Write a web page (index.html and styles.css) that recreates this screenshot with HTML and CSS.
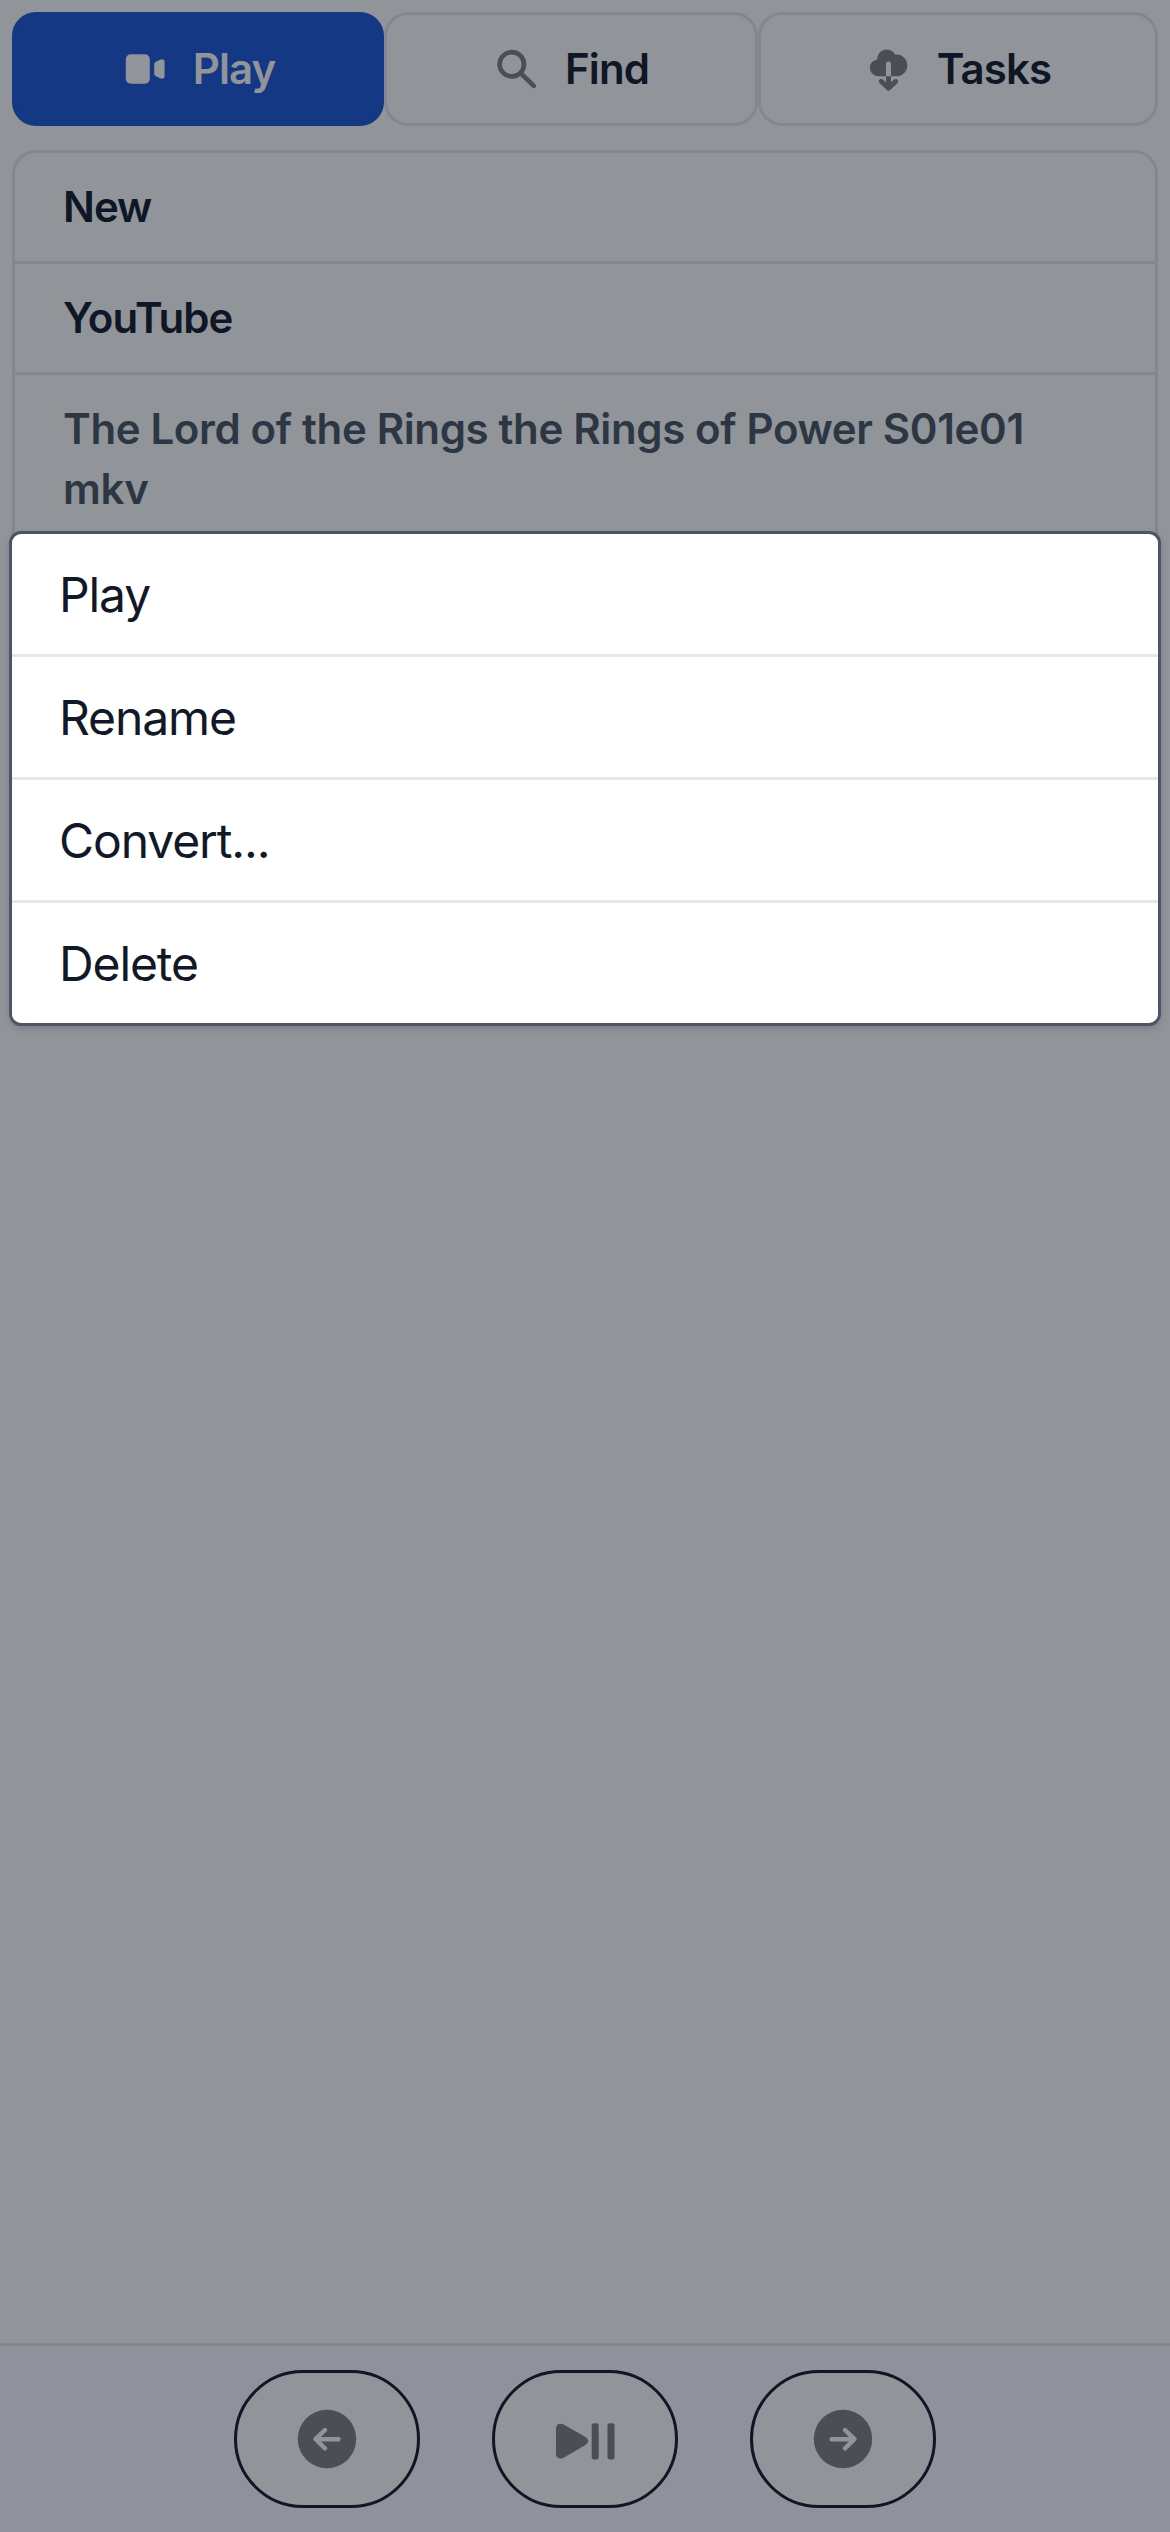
FILE: index.html
```html
<!DOCTYPE html>
<html lang="en">
<head>
<meta charset="utf-8">
<title>Player</title>
<link rel="stylesheet" href="styles.css">
</head>
<body>
<div class="app">
  <nav class="tabs">
    <button class="tab tab-active">
      <svg class="tab-icon" viewBox="0 0 48 48" fill="currentColor"><rect x="4.8" y="9.2" width="24" height="29.6" rx="5"/><path d="M33.2 19.5q0-1.6 1.4-2.5l4.4-2.3q4.6-1.3 4.6 2.3v14q0 3.6-4.6 2.3L34.6 31q-1.4-.9-1.4-2.5z"/></svg>
      <span class="tab-label">Play</span>
    </button>
    <button class="tab">
      <svg class="tab-icon" viewBox="0 0 48 48" fill="none" stroke="currentColor" stroke-width="4.6" stroke-linecap="round"><circle cx="18.8" cy="19.3" r="12.2"/><path d="M28 28.5l12.8 12.3"/></svg>
      <span class="tab-label">Find</span>
    </button>
    <button class="tab">
      <svg class="tab-icon" viewBox="0 0 48 48" fill="currentColor"><path d="M12.5 31.2a8.4 8.4 0 0 1-.4-16.7A9.6 9.6 0 0 1 30.2 9.7a10.8 10.8 0 1 1 2 21.5H26V19a2.5 2.5 0 0 0-5 0v12.2z"/><path d="M21 31.2h5v6.2l3-2.9c2.7-1.8 5.2.9 3.5 3.4l-7.3 7.2q-1.7 1.5-3.4 0l-7.3-7.2c-1.7-2.5.8-5.2 3.5-3.4l3 2.9z"/></svg>
      <span class="tab-label">Tasks</span>
    </button>
  </nav>

  <ul class="files">
    <li class="file">New</li>
    <li class="file">YouTube</li>
    <li class="file file-selected"><span class="title-line">The Lord of the Rings the Rings of Power S01e01</span> mkv</li>
  </ul>

  <footer class="controls">
    <button class="control"><svg class="control-icon" viewBox="0 0 60 60"><circle cx="30" cy="30" r="29.2" fill="currentColor"/><path class="arrow" d="M41.5 30.2H18.8M28 21l-9.5 9.2 9.5 9.2"/></svg></button>
    <button class="control"><svg class="control-icon" viewBox="0 0 60 60" fill="currentColor"><path d="M1 20q0-6 6-5l1.500.5 22 12.600q5.500 4.100 0 8l-22 12.600-1.500.5Q1 50.500 1 44.500z"/><rect x="36.700" y="14.200" width="7" height="36.300" rx="2.300"/><rect x="52.500" y="14.200" width="7" height="36.300" rx="2.300"/></svg></button>
    <button class="control"><svg class="control-icon" viewBox="0 0 60 60"><circle cx="30" cy="30" r="29.2" fill="currentColor"/><path class="arrow" d="M18.500 30.200h22.700M32 21l9.500 9.200-9.500 9.200"/></svg></button>
  </footer>

  <ul class="menu">
    <li class="menu-item">Play</li>
    <li class="menu-item">Rename</li>
    <li class="menu-item">Convert...</li>
    <li class="menu-item">Delete</li>
  </ul>
</div>
</body>
</html>
```
FILE: styles.css
```css
* { box-sizing: border-box; }

body {
  margin: 0;
  background: #919499;
  color: #0f1726;
  font-family: Inter, "Liberation Sans", sans-serif;
}

.app {
  position: relative;
  height: 2532px;
  display: flex;
  flex-direction: column;
}

ul { margin: 0; padding: 0; list-style: none; }

button { font: inherit; color: inherit; margin: 0; padding: 0; background: none; }

.tabs {
  display: grid;
  grid-template-columns: 372px 374px 400px;
  height: 114px;
  margin: 12px 12px 24px;
}

.tab {
  display: flex;
  align-items: center;
  justify-content: center;
  gap: 24px;
  border: 3px solid #848791;
  border-radius: 24px;
  font-size: 42px;
  font-weight: 570;
  letter-spacing: -.9px;
  line-height: 60px;
}

.tab-active { background: #153885; border-color: #153885; color: #919499; }
.tab-icon { width: 48px; height: 48px; color: #4b4e52; }
.tab-active .tab-icon { color: #919499; }

.files {
  flex: 1;
  margin: 0 12px;
  border: 3px solid #848791;
  border-bottom: 0;
  border-radius: 24px 24px 0 0;
  max-height: 500px;
}

.file {
  padding: 24px 48px;
  font-size: 42px;
  font-weight: 570;
  letter-spacing: -1px;
  line-height: 60px;
}

.file + .file { border-top: 3px solid #848791; }
.file-selected { color: #2d3744; letter-spacing: -.35px; }
.title-line { white-space: nowrap; }

.controls {
  display: flex;
  justify-content: center;
  gap: 72px;
  height: 189px;
  margin-top: auto;
  padding-top: 24px;
  border-top: 3px solid #848791;
  background: #8f929b;
}

.control {
  display: flex;
  align-items: center;
  justify-content: center;
  width: 186px;
  height: 138px;
  border: 3px solid #0f1726;
  border-radius: 69px;
  background: #919499;
  color: #4b4e52;
}

.control-icon { width: 60px; height: 60px; }

.arrow {
  fill: none;
  stroke: #919499;
  stroke-width: 4.4;
  stroke-linecap: round;
  stroke-linejoin: round;
}

/* context menu over the file list */
.menu {
  position: absolute;
  top: 531px;
  left: 9px;
  right: 9px;
  border: 3px solid #4b5566;
  border-radius: 12px;
  background: #fff;
  color: #111827;
  box-shadow: 0 3px 9px rgba(0, 0, 0, .1), 0 3px 6px -3px rgba(0, 0, 0, .1);
}

.menu-item {
  height: 120px;
  padding: 25px 47px 23px;
  font-size: 48px;
  font-weight: 430;
  letter-spacing: -1.1px;
  line-height: 72px;
}

.menu-item + .menu-item { height: 123px; border-top: 3px solid #e5e7eb; }
```
